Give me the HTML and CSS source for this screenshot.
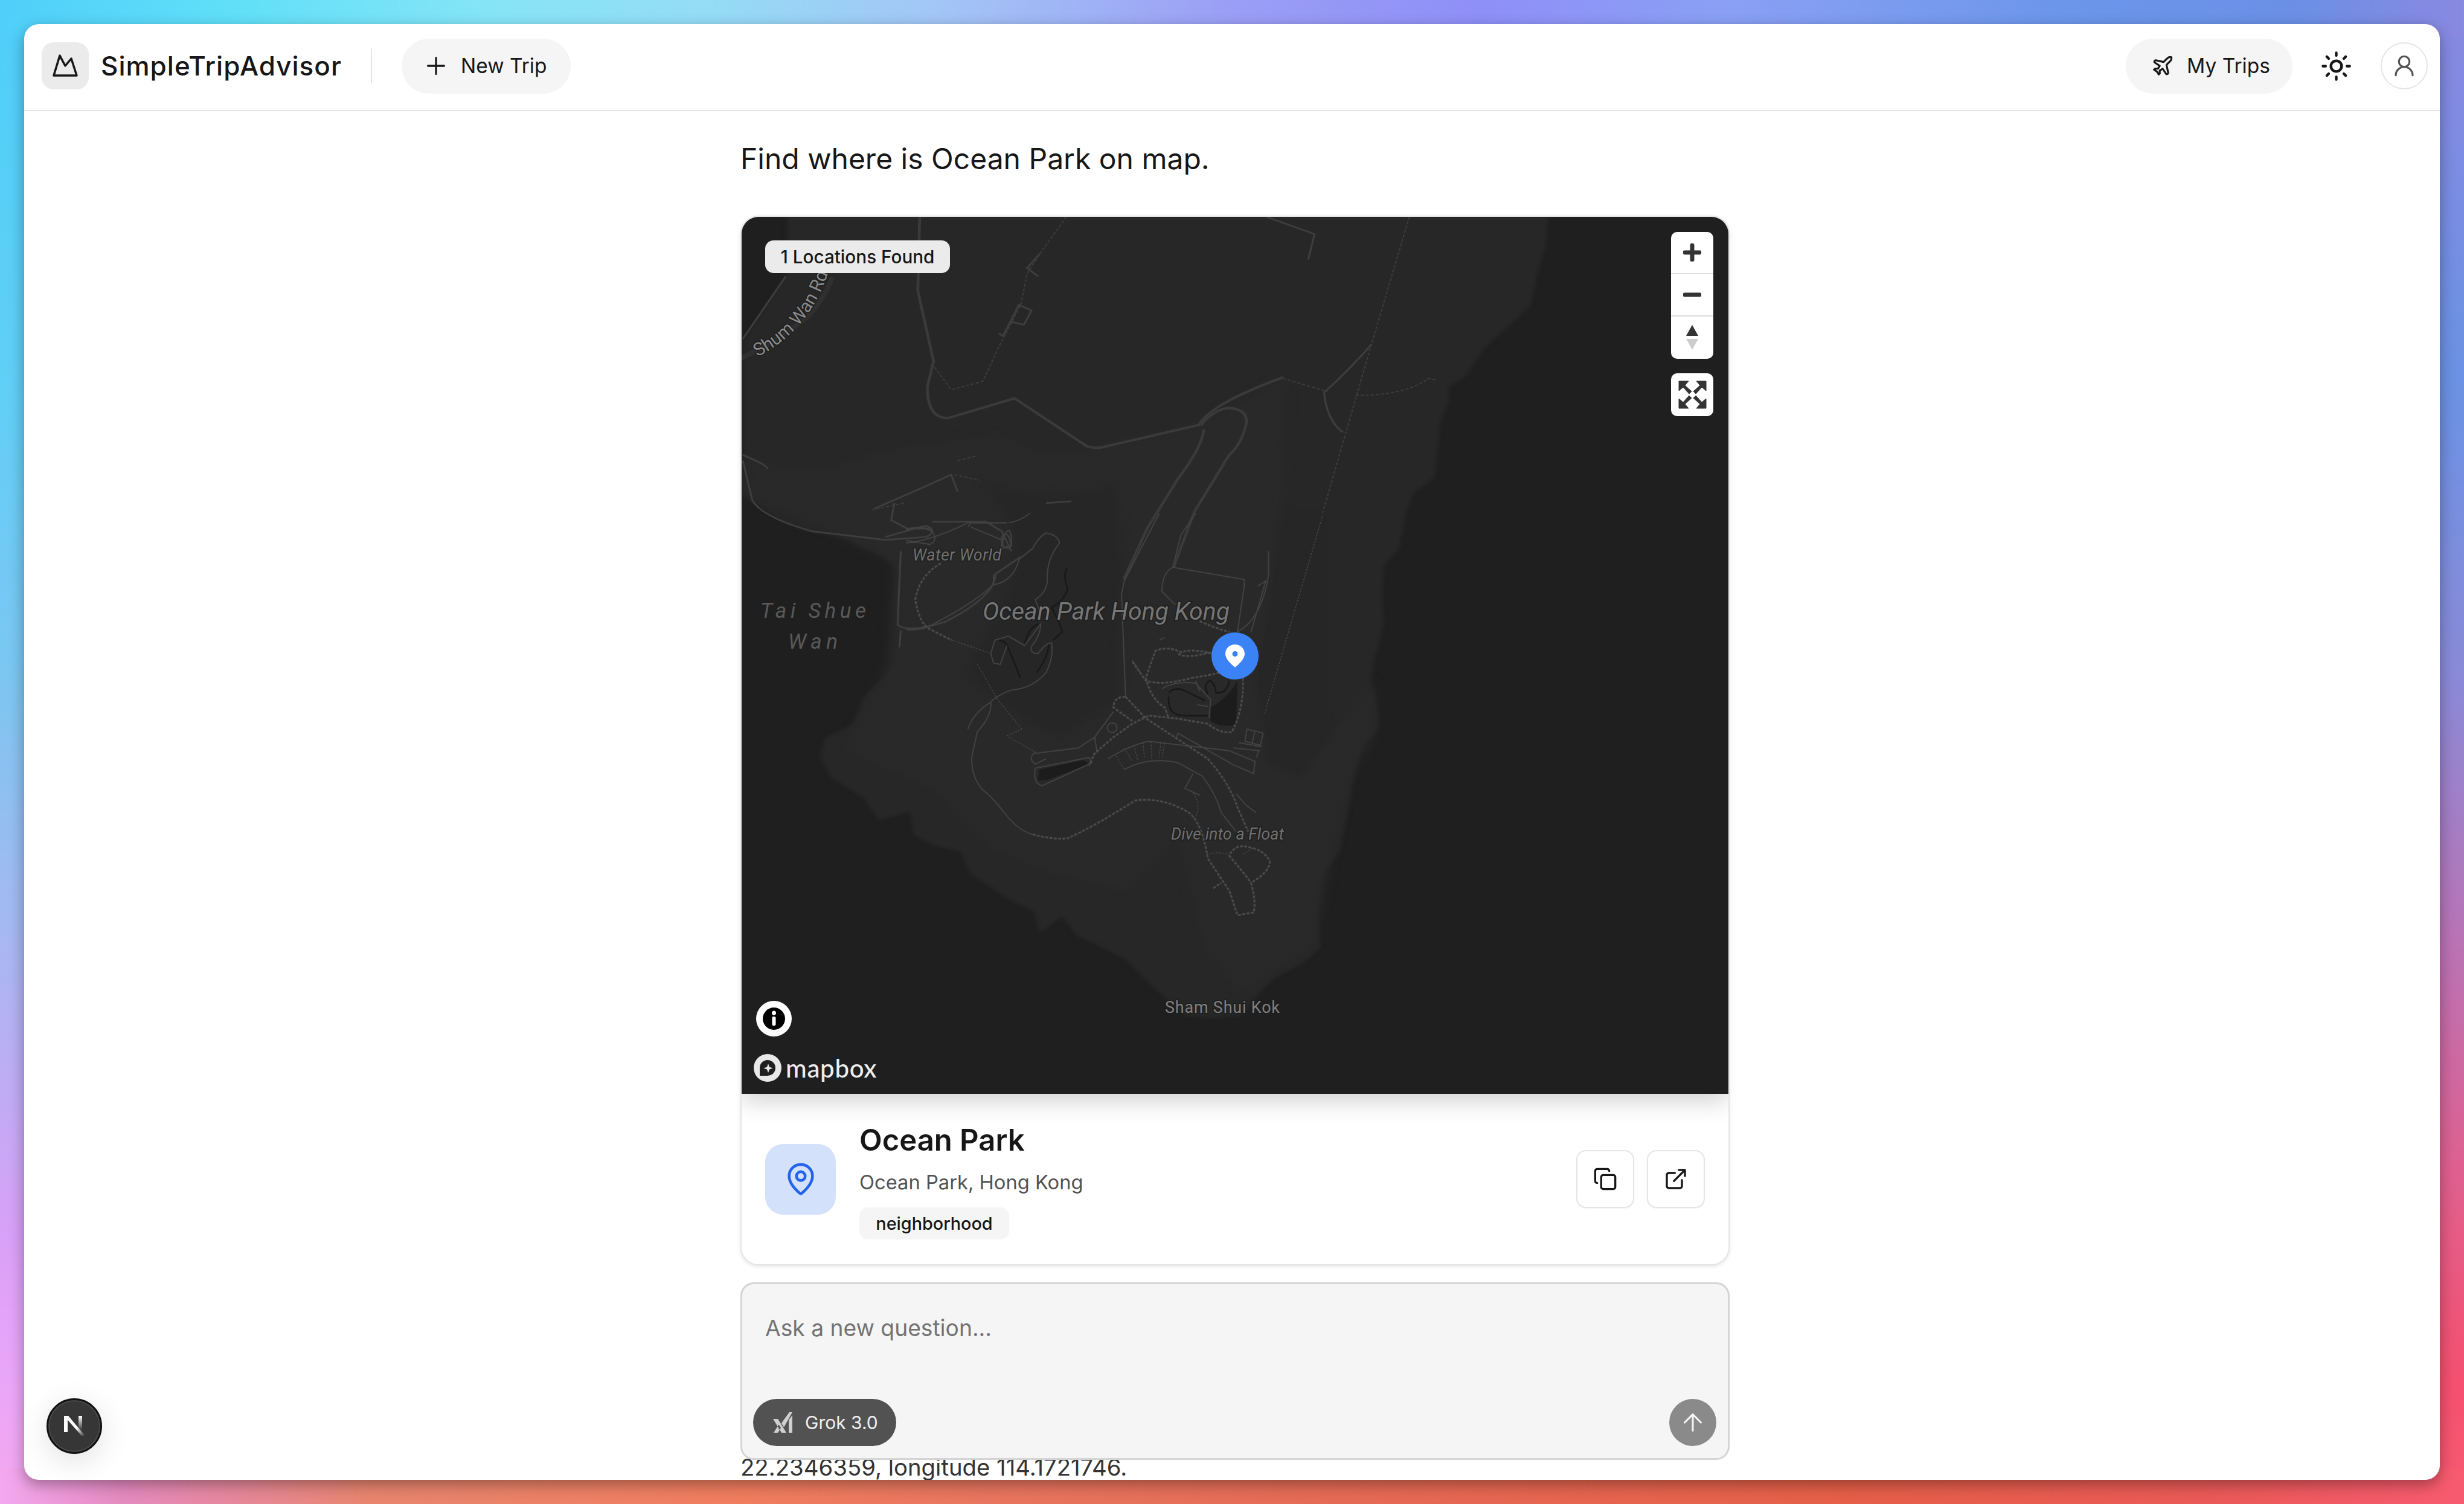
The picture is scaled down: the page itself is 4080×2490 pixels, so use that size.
FILE: index.html
```html
<!DOCTYPE html>
<html lang="en">
<head>
  <meta charset="UTF-8">
  <meta name="viewport" content="width=device-width, initial-scale=1.0">
  <title>SimpleTripAdvisor</title>
  <link rel="stylesheet" href="styles.css">
</head>
<body>
  <div class="window">
    <header class="topbar">
      <div class="logo-box">
        <svg class="logo-icon" viewBox="0 0 42 38"><path d="M2 35 H40 L31 7 L21 19 L12 2 Z"/></svg>
      </div>
      <span class="brand">SimpleTripAdvisor</span>
      <span class="divider"></span>
      <button class="pill new-trip">
        <svg class="icon icon-plus" viewBox="0 0 24 24"><path d="M5 12h14M12 5v14"/></svg>
        New Trip
      </button>
      <div class="topbar-right">
        <button class="pill my-trips">
          <svg class="icon icon-plane" viewBox="0 0 24 24"><path d="M17.8 19.2 16 11l3.5-3.5C21 6 21.5 4 21 3c-1-.5-3 0-4.5 1.5L13 8 4.8 6.2c-.5-.1-.9.1-1.1.5l-.3.5c-.2.5-.1 1 .3 1.3L9 12l-2 3H4l-1 1 3 2 2 3 1-1v-3l3-2 3.5 5.3c.3.4.8.5 1.3.3l.5-.2c.4-.3.6-.7.5-1.2z"/></svg>
          My Trips
        </button>
        <svg class="icon icon-sun" viewBox="0 0 24 24"><circle cx="12" cy="12" r="4"/><path d="M12 2v2M12 20v2M4.93 4.93l1.41 1.41M17.66 17.66l1.41 1.41M2 12h2M20 12h2M6.34 17.66l-1.41 1.41M19.07 4.93l-1.41 1.41"/></svg>
        <div class="avatar">
          <svg class="icon icon-user" viewBox="0 0 24 24"><circle cx="12" cy="8" r="5"/><path d="M20 21a8 8 0 0 0-16 0"/></svg>
        </div>
      </div>
    </header>

    <main class="chat">
      <h1 class="question">Find where is Ocean Park on map.</h1>

      <section class="map-card">
        <div class="map">
          <svg class="map-art" viewBox="0 0 1634 1452">
            <!-- land and roads traced from the wide view -->
            <g transform="matrix(1.046 0 0 .9375 2 -9)">
              <path class="land" d="M70 0 H1275 L1272 60 L1258 110 L1248 165 L1215 200 L1175 240 L1160 265 L1145 290 L1118 310 L1118 335 L1105 370 L1100 420 L1095 470 L1060 500 L1048 540 L1040 595 L1015 625 L1012 680 L1015 730 L1000 790 L995 830 L1005 880 L1005 915 L978 945 L968 1000 L958 1060 L945 1130 L915 1175 L910 1240 L915 1300 L885 1330 L840 1355 L815 1385 L790 1420 L740 1425 L700 1420 L670 1390 L640 1360 L605 1320 L560 1295 L530 1280 L505 1245 L470 1275 L460 1235 L420 1215 L395 1195 L360 1170 L345 1130 L300 1120 L270 1100 L265 1060 L215 1075 L190 1035 L140 1000 L122 965 L130 930 L175 905 L190 860 L235 810 L248 760 L240 680 L245 635 L225 610 L155 575 L100 565 L60 548 L0 500 V230 L70 110 Z"/>
              <path class="land-light" d="M0 430 Q60 470 180 440 Q260 400 420 400 Q500 450 600 400 Q720 390 860 290 L850 700 L835 980 L880 995 L1000 830 L1000 920 L960 1000 L930 1140 L905 1290 L790 1380 L730 1300 L690 1100 L610 1200 L520 1180 L400 1130 L300 1020 L160 950 L230 800 L240 620 L130 560 L0 500 Z"/>
              <path class="land-dark" d="M380 480 Q500 520 590 480 L600 640 L595 860 L500 930 Q420 880 350 820 L400 720 Q450 620 420 540 Z"/>
              <path class="road" d="M280 10 L277 140 L302 265 L292 310 Q292 365 325 365 L430 330 L545 415 Q560 420 575 415 L722 377 Q740 340 855 293"/>
              <path class="road" d="M730 385 Q725 420 690 470 L640 560 L603 650"/>
              <path class="road" d="M797 375 Q800 350 770 347 Q745 350 725 378 M797 375 Q790 410 770 430 L715 530 L682 628"/>
              <path class="road-thin" d="M920 320 Q960 280 995 235 M920 320 Q925 370 950 390 M830 10 L905 40 L895 85 M405 215 L412 220 L437 165 L457 175 L445 200 L425 195 M470 75 L450 100 L468 115 M0 430 L20 440 Q40 450 38 455 M0 440 L15 510 Q30 540 110 565 L225 580 L290 575 Q310 565 290 555 L225 575 M208 525 L280 490 L330 465 L340 495 M240 515 L235 545 L260 560 L300 560 M300 548 L385 548 L410 565 L425 600 M250 600 L245 730 Q260 745 320 725 Q400 680 400 640 L440 610 M410 575 Q420 560 425 590 L410 595 Z M480 515 L520 512 M250 740 L248 770 M68 115 L0 225"/>
              <path class="road-dash" d="M512 10 L470 75 L450 110 L440 165 L405 240 L380 300 L330 315 L300 270 M855 295 L925 318 M970 325 Q1050 325 1085 295 L1100 298 M1055 10 L995 235 L825 890 M335 465 L375 475 M340 440 L370 432 M255 515 L205 527"/>
            </g>
            <!-- park paths traced from the close view -->
            <g transform="translate(272 491) scale(.4464)">
              <path class="land-dark" d="M1400 0 H1568 V820 L1460 975 L1350 910 L1300 630 Z"/>
              <path class="pond" d="M1130 720 Q1200 680 1230 620 L1225 780 Q1180 800 1130 770 Z M495 950 L660 915 L680 930 L520 990 L490 990 Z"/>
              <path class="river" d="M975 665 Q1000 640 1040 660 L1110 695 M975 680 Q970 750 1030 750 L1120 750 M1120 670 Q1100 630 1130 620 Q1150 640 1150 665 Q1190 670 1200 620 M600 205 Q580 220 600 280 Q590 320 540 350 Q570 400 580 440 L545 470 M440 490 Q450 430 490 410 M345 470 Q370 470 380 500 L425 610 M485 590 Q530 530 530 480"/>
              <path class="park-road" d="M0 430 Q60 440 120 400 Q240 340 325 265 V225 V265 Q400 250 420 170 L470 130 Q490 90 520 72 Q565 80 570 110 Q520 170 525 250 Q520 295 480 320 L500 370 M800 300 L815 680 M940 0 L810 250 L800 300 M1075 0 L1020 80 L990 200 L1255 245 V270 L1230 440 M990 200 Q950 220 950 290 L1000 340 M375 35 H240 L230 50 M240 50 L360 100 Q370 60 385 65 Q400 100 385 130 Q355 130 360 100 M0 110 Q100 100 240 30 M380 35 Q420 30 460 0 M0 60 Q60 40 100 70 Q120 100 90 115 L0 100 M365 1110 Q320 1050 290 1030 Q240 980 245 900 L265 810 Q320 750 315 700 Q330 680 390 655 Q470 650 520 590 Q550 530 540 480 Q520 480 490 520 Q460 520 465 495 Q500 450 500 410 L440 490 L380 455 L330 470 L315 520 L325 555 L350 560 L375 490 M230 800 Q250 740 315 700 M365 1110 Q420 1180 470 1190 M480 890 L640 870 L700 830 L770 735 M700 830 L710 890 M480 945 L680 905 L690 925 L505 1010 Q470 1000 480 945 M480 885 Q450 910 480 930 L520 910 M750 910 Q830 860 900 845 L1030 860 L1200 880 L1295 920 L1290 965 L1210 930 L1010 815 L1000 835 M810 950 Q900 900 1010 925 L1100 975 Q1150 1040 1170 1110 L1225 1180 M1065 965 L1035 1020 L1090 1045 M1265 800 L1325 815 L1315 860 L1258 845 Z M1295 805 L1285 850 M1235 850 L1320 865 M1215 870 L1310 880 L1300 905 M1225 1040 L1265 1085 L1300 1110 M1080 710 L1120 715 M1075 620 L1090 660 M840 545 L870 590 M960 460 L940 470 M1230 440 Q1320 390 1345 230 V140 M1280 440 L1335 250 L1305 270 M950 650 Q1000 620 1075 630 L1130 690 L1125 760"/>
              <circle class="park-road" cx="765" cy="795" r="18"/>
              <path class="path-thick" d="M1135 520 Q1060 500 1020 515 Q970 490 925 510 L890 610 Q910 690 960 720 L975 760 M1010 520 Q1040 540 1130 515 M840 550 L890 620 Q950 640 1060 610 Q1130 600 1165 590 M1250 610 Q1255 720 1210 810 Q1170 820 1120 780 L1000 760 L900 750 L840 780 L770 830 L700 890 L680 935 M815 680 Q770 680 770 720 L840 770 M815 680 L890 760 L1120 910 Q1200 1000 1230 1090 L1270 1180 M130 185 Q50 230 35 320 Q50 410 90 430 L170 470 M470 1190 Q540 1210 600 1205 Q700 1160 850 1065 Q950 1050 1050 1110 Q1100 1150 1120 1280 L1200 1400 L1230 1490 L1290 1480 Q1300 1440 1280 1370 Q1350 1330 1350 1290 Q1330 1250 1280 1240 Q1220 1220 1200 1270 L1250 1330 L1280 1370 M1090 400 Q1160 430 1200 440 M1140 1390 L1170 1370"/>
              <path class="path-thin" d="M170 470 L310 518 M265 560 L340 690 L430 800 L375 825 L480 885 M780 900 L810 950 M810 870 L840 920 M845 860 L860 915 M880 850 L885 910 M910 845 L912 910 M945 850 L940 910 M960 850 L950 910 M1065 1035 Q1100 1090 1070 1130 M1115 1265 Q1170 1250 1205 1270 M1545 10 L1330 745 M1250 1265 L1290 1240"/>
            </g>
            <path class="road-wide" d="M0 234 Q60 205 110 165 Q140 130 150 100"/>
            <path id="shum-road" class="no-stroke" d="M26 232 Q116 186 146 84"/>
            <text class="map-label halo shum"><textPath href="#shum-road">Shum Wan Rd</textPath></text>
            <text class="map-label halo water-world" x="283" y="569" textLength="147">Water World</text>
            <text class="map-label halo ocean" x="399" y="667" textLength="409">Ocean Park Hong Kong</text>
            <text class="map-label halo water-world" x="711" y="1031" textLength="187">Dive into a Float</text>
            <text class="map-label halo sham" x="701" y="1318" textLength="190">Sham Shui Kok</text>
            <text class="map-label tai" x="31" y="664" textLength="175">Tai Shue</text>
            <text class="map-label tai" x="77" y="715" textLength="82">Wan</text>
          </svg>

          <span class="found-chip">1 Locations Found</span>

          <div class="map-controls">
            <div class="ctrl-group">
              <div class="ctrl-btn"><svg class="ctrl-icon" viewBox="0 0 30 30"><path d="M15 3v24M3 15h24"/></svg></div>
              <div class="ctrl-btn"><svg class="ctrl-icon" viewBox="0 0 30 30"><path d="M3 15h24"/></svg></div>
              <div class="ctrl-btn">
                <svg class="compass" viewBox="0 0 20 42"><path class="compass-n" d="M10 0 L20 18 H0 Z"/><path class="compass-s" d="M0 23 H20 L10 41 Z"/></svg>
              </div>
            </div>
            <div class="ctrl-group ctrl-btn ctrl-single">
              <svg class="fullscreen" viewBox="0 0 47 47">
                <path d="M1 1 H17 L11 8 L22 18 L18 22 L8 11 L1 17 Z M46 1 H30 L36 8 L25 18 L29 22 L39 11 L46 17 Z M1 46 H17 L11 39 L22 29 L18 25 L8 36 L1 30 Z M46 46 H30 L36 39 L25 29 L29 25 L39 36 L46 30 Z"/>
              </svg>
            </div>
          </div>

          <div class="map-marker">
            <svg viewBox="0 0 32 38"><path d="M16 0 C25 0 32 6.5 32 15.500 C32 24 23 32 16 38 C9 32 0 24 0 15.500 C0 6.500 7 0 16 0 Z M16 11 A4.500 4.500 0 1 0 16 20 A4.500 4.500 0 1 0 16 11 Z" fill-rule="evenodd"/></svg>
          </div>

          <div class="map-attrib">
            <svg viewBox="0 0 59 59"><circle class="info-outer" cx="29.500" cy="29.500" r="29.500"/><circle cx="29.500" cy="29.500" r="18.500"/><circle class="info-dot" cx="29.500" cy="20" r="3.500"/><rect class="info-dot" x="26.500" y="26" width="6" height="15" rx="2"/></svg>
          </div>
          <div class="mapbox-logo">
            <svg viewBox="0 0 46 46"><circle class="mb-ring" cx="23" cy="23" r="23"/><path d="M23 10 A13 13 0 1 1 23 36 H10 V23 A13 13 0 0 1 23 10 Z"/><path class="mb-star" d="M24 16 L26 21.500 L31.500 23.500 L26 25.500 L24 31 L22 25.500 L16.500 23.500 L22 21.500 Z"/></svg>
            <span class="mapbox-word">mapbox</span>
          </div>
        </div>

        <div class="place">
          <div class="place-icon">
            <svg class="icon icon-pin" viewBox="0 0 24 24"><path d="M20 10c0 4.993-5.539 10.193-7.399 11.799a1 1 0 0 1-1.202 0C9.539 20.193 4 14.993 4 10a8 8 0 0 1 16 0"/><circle cx="12" cy="10" r="3"/></svg>
          </div>
          <div class="place-text">
            <h2 class="place-name">Ocean Park</h2>
            <p class="place-address">Ocean Park, Hong Kong</p>
            <span class="place-tag">neighborhood</span>
          </div>
          <div class="place-actions">
            <button class="square-btn">
              <svg class="icon icon-action" viewBox="0 0 24 24"><rect x="8" y="8" width="14" height="14" rx="2"/><path d="M4 16c-1.100 0-2-.9-2-2V4c0-1.100.9-2 2-2h10c1.100 0 2 .9 2 2"/></svg>
            </button>
            <button class="square-btn">
              <svg class="icon icon-action" viewBox="0 0 24 24"><path d="M18 13v6a2 2 0 0 1-2 2H5a2 2 0 0 1-2-2V8a2 2 0 0 1 2-2h6M15 3h6v6M10 14 21 3"/></svg>
            </button>
          </div>
        </div>
      </section>

      <p class="answer-tail">22.2346359, longitude 114.1721746.</p>

      <form class="ask-box">
        <textarea class="ask-input" placeholder="Ask a new question..."></textarea>
        <div class="ask-tools">
          <button type="button" class="model-pill">
            <svg class="xai" viewBox="0 0 32 34"><path d="M0 11 L8 11 L22 34 L14 34 Z M1 34 L8 34 L13 26 L9.500 20.500 Z M14 18 L27 0 L32 0 L18 25 Z M26 13 L32 5 V34 H26 Z"/></svg>
            Grok 3.0
          </button>
          <button type="button" class="send-btn">
            <svg class="icon icon-send" viewBox="0 0 24 24"><path d="m5 12 7-7 7 7M12 19V5"/></svg>
          </button>
        </div>
      </form>
    </main>

    <div class="next-badge">
      <svg viewBox="0 0 40 44">
        <defs>
          <linearGradient id="n-diag" x1="0" y1="0" x2="1" y2="1"><stop offset=".6" stop-color="#fff"/><stop offset="1" stop-color="#fff" stop-opacity="0"/></linearGradient>
          <linearGradient id="n-right" x1="0" y1="0" x2="0" y2="1"><stop offset="0" stop-color="#fff"/><stop offset="1" stop-color="#fff" stop-opacity="0"/></linearGradient>
        </defs>
        <rect class="n-left" x="3" y="5" width="6" height="27"/>
        <path fill="url(#n-diag)" d="M3 5 H10 L38 38 H32 Z"/>
        <rect fill="url(#n-right)" x="27" y="5" width="6" height="24"/>
      </svg>
    </div>
  </div>
</body>
</html>
```

FILE: styles.css
```css
* {
  box-sizing: border-box;
}
html, body {
  height: 100%;
}
body {
  margin: 0;
  padding: 40px;
  font-family: 'Inter', 'Liberation Sans', sans-serif;
  color: #171717;
  background-color: #e8856f;
  background-repeat: no-repeat;
  background-size: 100% 60px, 100% 60px, 60px 100%, 60px 100%;
  background-position: top left, bottom left, top left, top right;
  background-image:
    linear-gradient(90deg, #4fcffa 0, #62e0f8 10%, #86e4f7 20%, #93ddf6 28%, #a3c6f6 38%, #9b9ef5 50%, #8f8ff7 60%, #8aa0f5 70%, #6b96ea 84%, #6a90e6 93%, #8a88e0 100%),
    linear-gradient(90deg, #f4a8f0 0, #e58ac0 5%, #e8856f 15%, #f07d5e 30%, #e8755f 40%, #e56a55 55%, #e65f48 75%, #ea5a58 90%, #f85a70 100%),
    linear-gradient(180deg, #4fcffa 0, #60cff6 25%, #7cc6f2 45%, #a6b8f2 62%, #d8a0f8 82%, #eba6f8 92%, #f4a8f0 100%),
    linear-gradient(180deg, #8a88e0 0, #6a92e4 25%, #8a8ad8 45%, #c070b0 65%, #e0608f 78%, #f5506f 92%, #f85a70 100%);
}
button, textarea {
  font-family: inherit;
}
button {
  border: none;
  cursor: pointer;
}

.window {
  position: relative;
  height: 100%;
  display: flex;
  flex-direction: column;
  background: #fff;
  border-radius: 24px;
  overflow: hidden;
  box-shadow: 0 8px 24px rgba(0, 0, 0, 0.35);
}

/* top bar */
.topbar {
  flex: none;
  height: 144px;
  padding: 0 20px 4px 29px;
  display: flex;
  align-items: center;
  border-bottom: 2px solid #e5e5e5;
}
.logo-box {
  width: 78px;
  height: 78px;
  border-radius: 20px;
  background: #ebebeb;
  display: flex;
  align-items: center;
  justify-content: center;
}
.logo-icon {
  width: 42px;
  height: 38px;
  fill: none;
  stroke: #171717;
  stroke-width: 3.500;
  stroke-linejoin: round;
}
.brand {
  margin-left: 20px;
  width: 398px;
  font-size: 44px;
  font-weight: 500;
  letter-spacing: 1px;
  white-space: nowrap;
}
.divider {
  width: 2px;
  height: 58px;
  margin-left: 49px;
  background: #e5e5e5;
}
.pill {
  height: 91px;
  border-radius: 46px;
  background: #f5f5f5;
  color: #171717;
  font-size: 33.500px;
  display: flex;
  align-items: center;
}
.new-trip {
  width: 280px;
  margin-left: 49px;
  padding-left: 34px;
  gap: 18px;
}
.topbar-right {
  margin-left: auto;
  display: flex;
  align-items: center;
}
.my-trips {
  width: 276px;
  padding-left: 42px;
  gap: 21px;
}
.icon {
  flex: none;
  fill: none;
  stroke: currentColor;
  stroke-width: 2;
  stroke-linecap: round;
  stroke-linejoin: round;
}
.icon-plus {
  width: 46px;
  height: 46px;
  stroke-width: 1.700;
}
.icon-plane {
  width: 38px;
  height: 38px;
}
.icon-sun {
  width: 53px;
  height: 53px;
  margin-left: 46px;
  color: #171717;
}
.avatar {
  width: 78px;
  height: 78px;
  margin-left: 47px;
  border: 2px solid #e5e5e5;
  border-radius: 50%;
  display: flex;
  align-items: center;
  justify-content: center;
  color: #525252;
}
.icon-user {
  width: 42px;
  height: 42px;
  stroke-width: 1.800;
}

/* chat column */
.chat {
  position: relative;
  flex: 1;
  width: 1648px;
  min-height: 0;
  margin: 0 auto;
  padding-left: 10px;
}
.question {
  margin: 0;
  height: 173px;
  padding-top: 48px;
  font-size: 48px;
  line-height: 62px;
  font-weight: 400;
}
.map-card {
  border: 2px solid #e5e5e5;
  border-radius: 30px;
  overflow: hidden;
  background: #fff;
  box-shadow: 0 2px 6px rgba(0, 0, 0, 0.1);
}

/* map */
.map {
  position: relative;
  height: 1452px;
  background: #1f1f1f;
  box-shadow: 0 12px 36px rgba(0, 0, 0, 0.18);
}
.map-art {
  display: block;
  width: 100%;
  height: 100%;
}
.land {
  fill: #272727;
  filter: blur(3px);
}
.land-light {
  fill: #292929;
  filter: blur(8px);
}
.land-dark {
  fill: #262626;
  filter: blur(8px);
}
.pond {
  fill: #1c1c1c;
}
.road, .road-thin, .road-dash, .park-road, .path-thick, .path-thin, .river, .road-wide, .no-stroke {
  fill: none;
}
.road {
  stroke: #3a3a3a;
  stroke-width: 4.500;
}
.road-thin {
  stroke: #3e3e3e;
  stroke-width: 3;
}
.road-dash {
  stroke: #3d3d3d;
  stroke-width: 2;
  stroke-dasharray: 5 3;
}
.road-wide {
  stroke: #303030;
  stroke-width: 8;
}
.park-road {
  stroke: #424242;
  stroke-width: 4.500;
  fill: none;
}
.path-thick {
  stroke: #4a4a4a;
  stroke-width: 7;
  stroke-dasharray: 11 5;
}
.path-thin {
  stroke: #484848;
  stroke-width: 3;
  stroke-dasharray: 7 5;
}
.river {
  stroke: #191919;
  stroke-width: 6;
}
.map-label {
  font-family: 'Roboto', 'Liberation Sans', sans-serif;
  font-style: italic;
  fill: #707070;
}
.halo {
  stroke: #1d1d1d;
  stroke-width: 3px;
  paint-order: stroke;
}
.shum {
  font-style: normal;
  font-size: 30px;
  fill: #8a8a8a;
}
.water-world {
  font-size: 27px;
}
.ocean {
  font-size: 41px;
  fill: #767676;
}
.sham {
  font-style: normal;
  font-size: 27px;
  fill: #808080;
}
.tai {
  font-size: 35px;
  fill: #595959;
}
.found-chip {
  position: absolute;
  left: 39px;
  top: 39px;
  width: 306px;
  height: 54px;
  border-radius: 14px;
  background: #ebebeb;
  font-size: 29.700px;
  font-weight: 500;
  line-height: 54px;
  text-align: center;
  color: #171717;
}
.map-controls {
  position: absolute;
  top: 25px;
  right: 25px;
  display: flex;
  flex-direction: column;
  gap: 24px;
}
.ctrl-group {
  width: 70px;
  border-radius: 10px;
  background: #fff;
  overflow: hidden;
}
.ctrl-btn {
  height: 70px;
  display: flex;
  align-items: center;
  justify-content: center;
  border-bottom: 2px solid #ddd;
}
.ctrl-btn:last-child {
  border-bottom: none;
}
.ctrl-single {
  height: 71px;
  border-bottom: none;
}
.ctrl-icon {
  width: 30px;
  height: 30px;
  fill: none;
  stroke: #333;
  stroke-width: 7;
  stroke-linecap: round;
}
.compass {
  width: 20px;
  height: 42px;
}
.compass-n {
  fill: #333;
}
.compass-s {
  fill: #ccc;
}
.fullscreen {
  width: 47px;
  height: 47px;
  fill: #333;
  stroke: #333;
  stroke-width: 1;
  stroke-linejoin: round;
}
.map-marker {
  position: absolute;
  left: 778px;
  top: 688px;
  width: 78px;
  height: 78px;
  border-radius: 50%;
  background: #3b82f6;
  display: flex;
  align-items: center;
  justify-content: center;
}
.map-marker svg {
  width: 32px;
  height: 38px;
  fill: #fff;
}
.map-attrib {
  position: absolute;
  left: 24px;
  top: 1298px;
  width: 59px;
  height: 59px;
}
.map-attrib svg {
  display: block;
  fill: #000;
}
.info-outer, .info-dot {
  fill: #fff;
}
.mapbox-logo {
  position: absolute;
  left: 20px;
  top: 1386px;
  height: 46px;
  display: flex;
  align-items: center;
  gap: 7px;
}
.mapbox-logo svg {
  width: 46px;
  height: 46px;
  fill: #1f1f1f;
}
.mb-ring {
  fill: #e8e8e8;
}
.mb-star {
  fill: #e8e8e8;
}
.mapbox-word {
  font-family: 'Lato', 'Liberation Sans', sans-serif;
  font-size: 42px;
  font-weight: 500;
  letter-spacing: 0.700px;
  color: #ededed;
}

/* place row under the map */
.place {
  height: 282px;
  padding: 0 39px;
  display: flex;
  align-items: center;
}
.place-icon {
  flex: none;
  width: 117px;
  height: 117px;
  border-radius: 30px;
  background: #d4e1fb;
  color: #2563eb;
  display: flex;
  align-items: center;
  justify-content: center;
}
.icon-pin {
  width: 58px;
  height: 58px;
  stroke-width: 1.900;
}
.place-text {
  margin-left: 39px;
  padding-top: 5px;
  display: flex;
  flex-direction: column;
  align-items: flex-start;
}
.place-name {
  margin: 0;
  font-size: 49px;
  line-height: 60px;
  font-weight: 600;
}
.place-address {
  margin: 14px 0 17px;
  font-size: 32.700px;
  line-height: 50px;
  color: #525252;
}
.place-tag {
  width: 248px;
  height: 53px;
  border-radius: 14px;
  background: #f5f5f5;
  font-size: 28.800px;
  font-weight: 500;
  line-height: 53px;
  text-align: center;
}
.place-actions {
  margin-left: auto;
  display: flex;
  gap: 21px;
}
.square-btn {
  width: 96px;
  height: 96px;
  border: 2px solid #e5e5e5;
  border-radius: 16px;
  background: #fff;
  color: #171717;
  display: flex;
  align-items: center;
  justify-content: center;
  box-shadow: 0 1px 2px rgba(0, 0, 0, 0.05);
}
.icon-action {
  width: 40px;
  height: 40px;
}

/* message that scrolled behind the input */
.answer-tail {
  margin: 304px 0 0;
  font-size: 38.300px;
  line-height: 60px;
  color: #333;
  white-space: nowrap;
}

/* input */
.ask-box {
  position: absolute;
  left: 10px;
  right: 0;
  bottom: 33px;
  height: 294px;
  display: flex;
  flex-direction: column;
  border: 3px solid #d4d4d4;
  border-radius: 22px;
  background: #f5f5f5;
}
.ask-input {
  flex: 1;
  padding: 48px 38px 0;
  border: none;
  outline: none;
  resize: none;
  background: transparent;
  font-size: 37.200px;
  line-height: 50px;
  color: #171717;
}
.ask-input::placeholder {
  color: #737373;
}
.ask-tools {
  padding: 0 19px 20px 18px;
  display: flex;
  align-items: center;
  justify-content: space-between;
}
.model-pill {
  width: 237px;
  height: 78px;
  padding-left: 33px;
  border-radius: 39px;
  background: #525252;
  color: #f0f0f0;
  font-size: 30px;
  display: flex;
  align-items: center;
  gap: 21px;
}
.xai {
  width: 32px;
  height: 34px;
  fill: #cfcfcf;
}
.send-btn {
  width: 78px;
  height: 78px;
  border-radius: 50%;
  background: #8a8a8a;
  color: #f5f5f5;
  display: flex;
  align-items: center;
  justify-content: center;
}
.icon-send {
  width: 46px;
  height: 46px;
  stroke-width: 1.600;
}

/* dev badge */
.next-badge {
  position: absolute;
  left: 37px;
  bottom: 43px;
  width: 92px;
  height: 92px;
  border-radius: 50%;
  border: 3px solid #111;
  background: #363636;
  display: flex;
  align-items: center;
  justify-content: center;
  box-shadow: inset 0 0 0 2px #4a4a4a, 0 12px 50px rgba(0, 0, 0, 0.12);
}
.next-badge svg {
  width: 40px;
  height: 44px;
}
.n-left {
  fill: #fff;
}
```
